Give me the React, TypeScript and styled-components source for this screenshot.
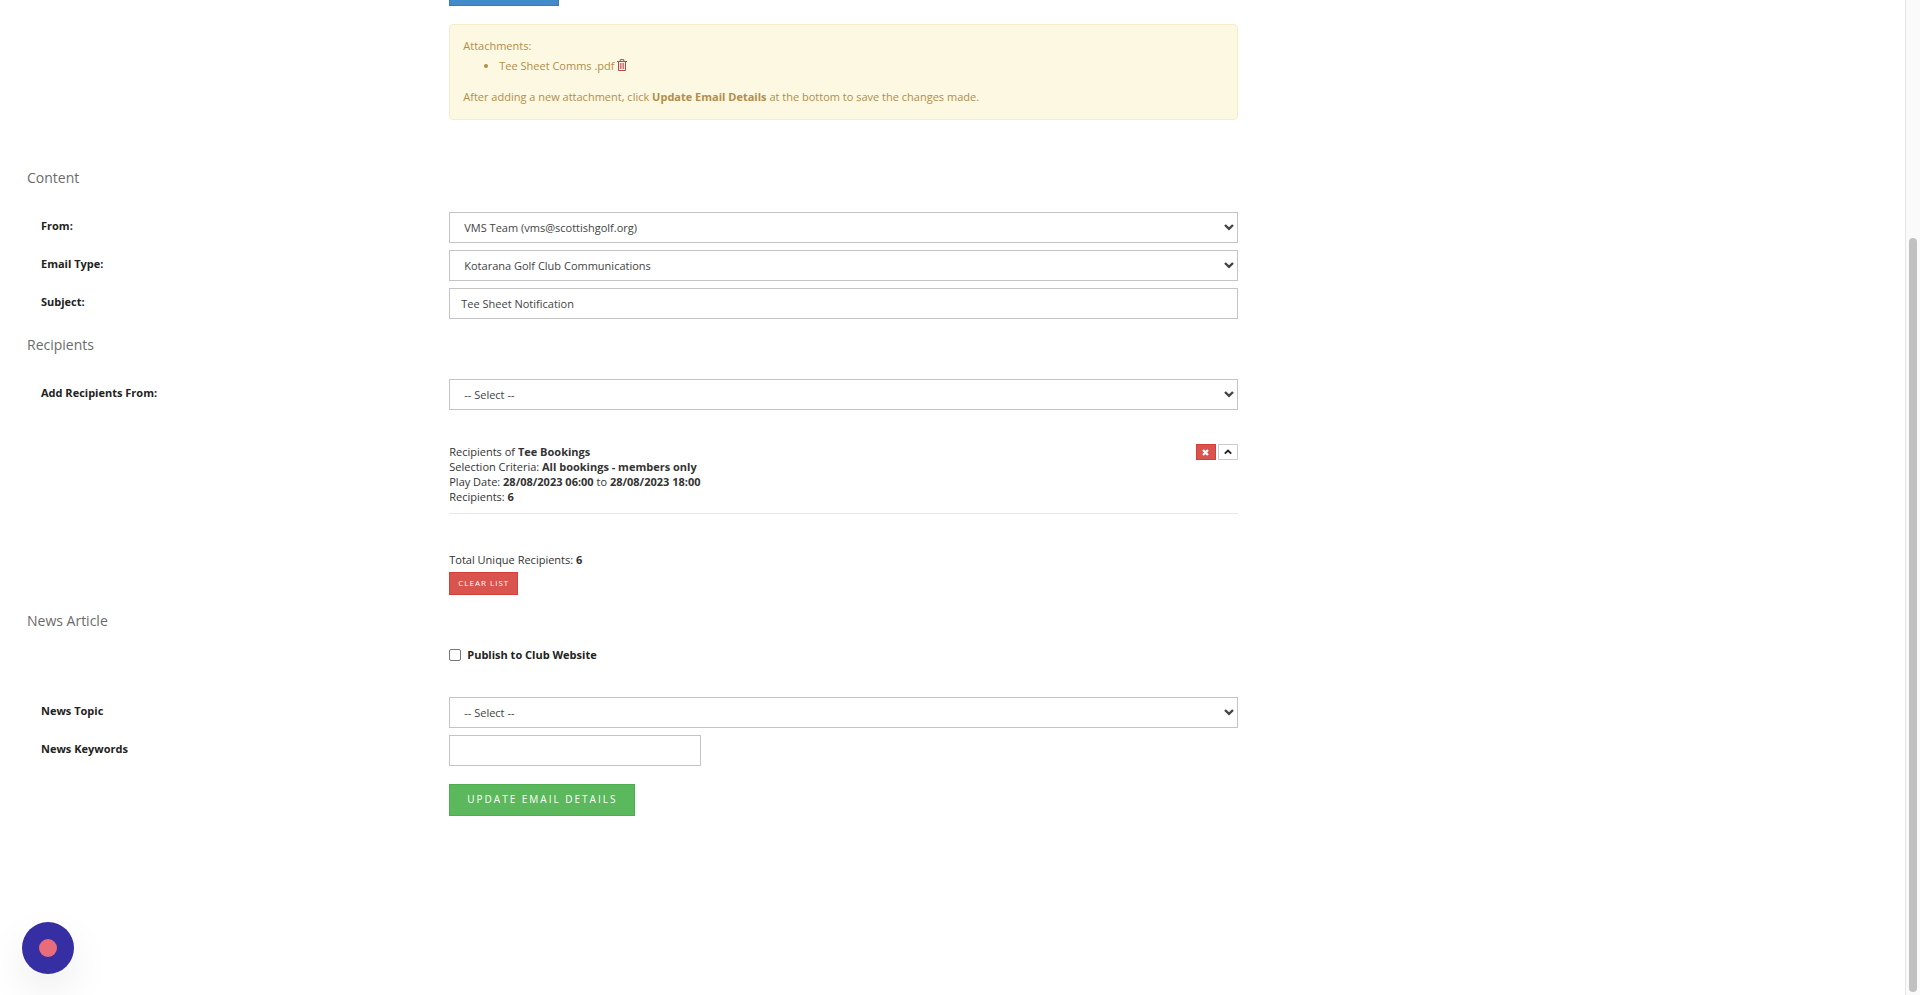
import React from "react";
import styled, { createGlobalStyle } from "styled-components";

const GlobalStyle = createGlobalStyle`
  *, *::before, *::after { box-sizing: border-box; }
  html { height: 100%; overflow: hidden; }
  body {
    margin: 0;
    background: #fff;
    color: #333;
    font: 11px/15px "Open Sans", "Noto Sans", sans-serif;
  }
  button, input, select { font: inherit; }
`;

const Page = styled.div`
  display: flex;
  min-height: 100vh;
  overflow: hidden;
`;

const Form = styled.form`
  flex: 1;
  min-width: 0;
  padding: 0 245px 60px 27px;
`;

const Row = styled.div`
  display: grid;
  grid-template-columns: 3fr 6fr 3fr;
`;

const Cell = styled.div`
  grid-column: 2;
  min-width: 0;
  padding: 0 14px;
`;

const Label = styled.label`
  grid-column: 1;
  padding: 6px 14px 0;
  font-weight: 700;
  color: #222;
`;

const Section = styled.section`
  display: flex;
  flex-direction: column;
`;

const Fields = styled.div`
  display: flex;
  flex-direction: column;
  gap: 7px;
`;

const Heading = styled.h2<{ $gap?: number }>`
  margin: 16px 0 ${(p) => p.$gap ?? 24}px;
  font-size: 14px;
  line-height: 20px;
  font-weight: 400;
  color: #6b6b6b;
`;

const Button = styled.button<{ $tone: "primary" | "danger" | "success" }>`
  display: block;
  border: 1px solid;
  border-radius: 0;
  color: #fff;
  text-transform: uppercase;
  white-space: nowrap;
  cursor: pointer;
  ${(p) =>
    ({
      primary: "background:#428bca;border-color:#357ebd;",
      danger: "background:#d9534f;border-color:#d43f3a;",
      success: "background:#5cb85c;border-color:#4cae4c;",
    })[p.$tone]}
`;

const UploadButton = styled(Button)`
  width: 110px;
  height: 32px;
  margin-top: -26px;
  font-size: 10px;
  letter-spacing: 2px;
`;

const ClearButton = styled(Button)`
  height: 23px;
  margin-top: 5px;
  padding: 0 8px 1px;
  font-size: 8px;
  line-height: 12px;
  letter-spacing: 1px;
`;

const SubmitButton = styled(Button)`
  height: 32px;
  margin-top: 18px;
  padding: 0 17px 1px;
  font-size: 10px;
  letter-spacing: 2px;
`;

const Alert = styled.div`
  margin: 18px 0 32px;
  padding: 13px 13px 15px;
  border: 1px solid #f7edcb;
  border-radius: 4px;
  background: #fcf8e2;
  color: #b38d4a;

  p { margin: 0; }
  ul { margin: 5px 0 16px; padding-left: 36px; }
`;

const IconButton = styled.button`
  padding: 0;
  border: 0;
  background: none;
  color: #b5484a;
  line-height: 0;
  vertical-align: -1px;
  cursor: pointer;
`;

const SelectBox = styled.div`
  position: relative;

  svg {
    position: absolute;
    right: 4px;
    top: 10px;
    pointer-events: none;
  }
`;

const Select = styled.select`
  appearance: none;
  display: block;
  width: 100%;
  height: 31px;
  padding: 0 14px;
  border: 1px solid #c4c4c4;
  border-radius: 0;
  background: #fff;
  color: #444;
`;

const TextInput = styled.input<{ $short?: boolean }>`
  display: block;
  width: ${(p) => (p.$short ? "252px" : "100%")};
  height: 31px;
  padding: 0 11px;
  border: 1px solid #c4c4c4;
  border-radius: 0;
  background: #fff;
  color: #444;
`;

const Group = styled.div`
  display: flex;
  justify-content: space-between;
  margin: 34px 0 38px;
  padding-bottom: 9px;
  border-bottom: 1px solid #e8e8e8;

  p { margin: 0; }
`;

const Actions = styled.div`
  display: flex;
  gap: 2px;
`;

const SquareButton = styled.button<{ $danger?: boolean }>`
  display: flex;
  align-items: center;
  justify-content: center;
  width: 20px;
  height: 16px;
  padding: 0;
  border: 1px solid ${(p) => (p.$danger ? "#d43f3a" : "#ccc")};
  background: ${(p) => (p.$danger ? "#d9534f" : "#fff")};
  color: ${(p) => (p.$danger ? "#fff" : "#222")};
  cursor: pointer;
`;

const CheckLabel = styled.label`
  display: flex;
  align-items: center;
  gap: 6px;
  margin-bottom: 35px;
  height: 15px;
  font-weight: 700;
  color: #222;

  input {
    appearance: none;
    width: 12px;
    height: 12px;
    margin: 0;
    border: 1px solid #767676;
    border-radius: 2px;
    background: #fff;
  }
`;

const ScrollTrack = styled.div`
  width: 15px;
  height: 100vh;
  padding: 238px 3px 3px;
  border-left: 1px solid #e6e6e6;
  background: #fafafa;
`;

const ScrollThumb = styled.div`
  height: 100%;
  border-radius: 4px;
  background: #c1c1c1;
`;

const RecordButton = styled.button`
  position: fixed;
  left: 22px;
  bottom: 21px;
  display: flex;
  align-items: center;
  justify-content: center;
  width: 52px;
  height: 52px;
  padding: 0;
  border: 0;
  border-radius: 50%;
  background: #362fa3;
  box-shadow: 0 16px 40px rgba(0, 0, 0, 0.08);
  cursor: pointer;

  &::before {
    content: "";
    width: 18px;
    height: 18px;
    border-radius: 50%;
    background: #e96c7a;
  }
`;

const Chevron = ({ up = false, size = 10 }: { up?: boolean; size?: number }) => (
  <svg width={size} height={size} viewBox="0 0 10 10" fill="none" stroke={up ? "#222" : "#444"} strokeWidth="2.4" aria-hidden="true">
    <path d={up ? "M1 7 5 3.2 9 7" : "M1 3 5 6.8 9 3"} />
  </svg>
);

const Trash = () => (
  <svg width="10" height="12" viewBox="0 0 10 12" fill="none" stroke="currentColor" aria-hidden="true">
    <path d="M0 2.5h10M3.2 2V.6h3.6V2M1.5 2.5v9h7v-9" />
    <path d="M3.4 4v6M5 4v6M6.6 4v6" strokeWidth="0.8" />
  </svg>
);

const Cross = () => (
  <svg width="7" height="7" viewBox="0 0 8 8" stroke="currentColor" strokeWidth="2.6" aria-hidden="true">
    <path d="M1.2 1.2 6.8 6.8M6.8 1.2 1.2 6.8" />
  </svg>
);

function SelectField({ id, label, value }: { id: string; label: string; value: string }) {
  return (
    <Row>
      <Label htmlFor={id}>{label}</Label>
      <Cell>
        <SelectBox>
          <Select id={id} defaultValue={value}>
            <option>{value}</option>
          </Select>
          <Chevron />
        </SelectBox>
      </Cell>
    </Row>
  );
}

function TextField({ id, label, value, short }: { id: string; label: string; value?: string; short?: boolean }) {
  return (
    <Row>
      <Label htmlFor={id}>{label}</Label>
      <Cell>
        <TextInput id={id} type="text" defaultValue={value} $short={short} />
      </Cell>
    </Row>
  );
}

export default function App() {
  return (
    <Page>
      <GlobalStyle />
      <Form onSubmit={(e) => e.preventDefault()}>
        <Row>
          <Cell>
            <UploadButton type="button" $tone="primary" aria-label="Add attachment" />
            <Alert>
              <p>Attachments:</p>
              <ul>
                <li>
                  Tee Sheet Comms .pdf{" "}
                  <IconButton type="button" aria-label="Remove attachment">
                    <Trash />
                  </IconButton>
                </li>
              </ul>
              <p>
                After adding a new attachment, click <b>Update Email Details</b> at the bottom to save the changes made.
              </p>
            </Alert>
          </Cell>
        </Row>

        <Section>
          <Heading>Content</Heading>
          <Fields>
            <SelectField id="from" label="From:" value="VMS Team (vms@scottishgolf.org)" />
            <SelectField id="type" label="Email Type:" value="Kotarana Golf Club Communications" />
            <TextField id="subject" label="Subject:" value="Tee Sheet Notification" />
          </Fields>
        </Section>

        <Section>
          <Heading>Recipients</Heading>
          <SelectField id="add" label="Add Recipients From:" value="-- Select --" />
          <Row>
            <Cell>
              <Group>
                <div>
                  <p>Recipients of <b>Tee Bookings</b></p>
                  <p>Selection Criteria: <b>All bookings - members only</b></p>
                  <p>Play Date: <b>28/08/2023 06:00</b> to <b>28/08/2023 18:00</b></p>
                  <p>Recipients: <b>6</b></p>
                </div>
                <Actions>
                  <SquareButton type="button" $danger aria-label="Remove recipients">
                    <Cross />
                  </SquareButton>
                  <SquareButton type="button" aria-label="Collapse">
                    <Chevron up size={8} />
                  </SquareButton>
                </Actions>
              </Group>
              <div>Total Unique Recipients: <b>6</b></div>
              <ClearButton type="button" $tone="danger">Clear List</ClearButton>
            </Cell>
          </Row>
        </Section>

        <Section>
          <Heading $gap={16}>News Article</Heading>
          <Row>
            <Cell>
              <CheckLabel>
                <input type="checkbox" />
                Publish to Club Website
              </CheckLabel>
            </Cell>
          </Row>
          <Fields>
            <SelectField id="topic" label="News Topic" value="-- Select --" />
            <TextField id="keywords" label="News Keywords" short />
          </Fields>
          <Row>
            <Cell>
              <SubmitButton type="submit" $tone="success">Update Email Details</SubmitButton>
            </Cell>
          </Row>
        </Section>
      </Form>
      <ScrollTrack>
        <ScrollThumb />
      </ScrollTrack>
      <RecordButton type="button" aria-label="Record" />
    </Page>
  );
}
